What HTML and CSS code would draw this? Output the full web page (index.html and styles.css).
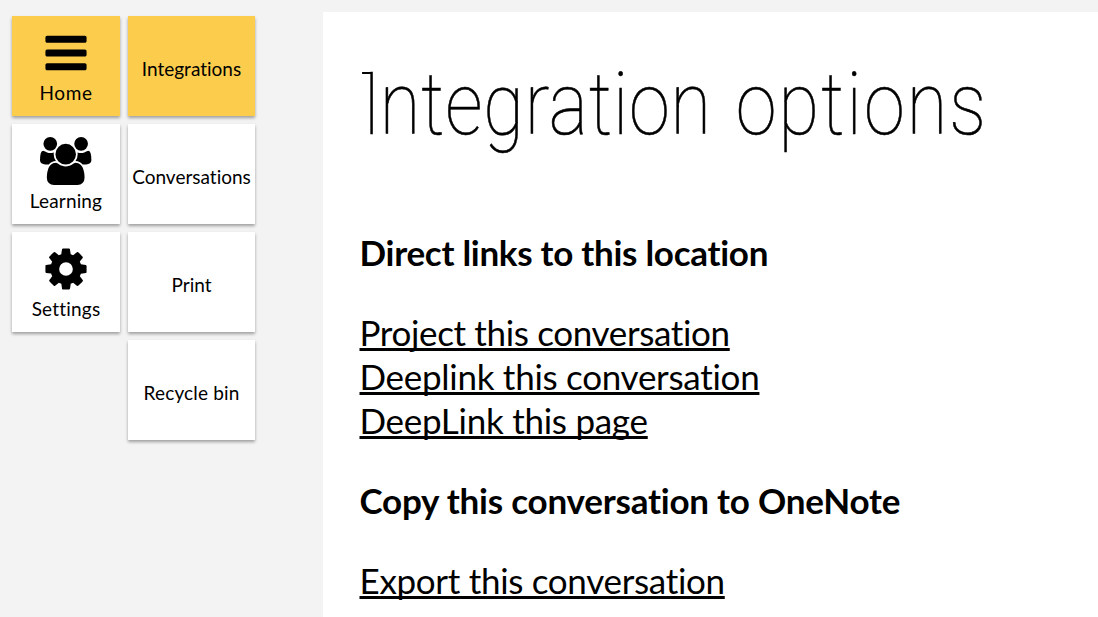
FILE: index.html
```html
<!DOCTYPE html>
<html lang="en">
<head>
<meta charset="utf-8">
<title>Integration options</title>
<link rel="stylesheet" href="styles.css">
</head>
<body>
<div class="layout">
  <nav class="menu main-menu">
    <a class="tile active">
      <svg class="icon" viewBox="0 0 1792 1792"><path d="M1664 1344v128q0 26-19 45t-45 19h-1408q-26 0-45-19t-19-45v-128q0-26 19-45t45-19h1408q26 0 45 19t19 45zm0-512v128q0 26-19 45t-45 19h-1408q-26 0-45-19t-19-45v-128q0-26 19-45t45-19h1408q26 0 45 19t19 45zm0-512v128q0 26-19 45t-45 19h-1408q-26 0-45-19t-19-45v-128q0-26 19-45t45-19h1408q26 0 45 19t19 45z"/></svg>
      <span class="label home">Home</span>
    </a>
    <a class="tile">
      <svg class="icon wide" viewBox="0 0 1920 1792"><path d="M593 896q-162 5-265 128h-134q-82 0-138-40.5t-56-118.5q0-353 124-353 6 0 43.5 21t97.5 42.5 119 21.5q67 0 133-23-5 37-5 66 0 139 81 256zm1071 637q0 120-73 189.5t-194 69.5h-874q-121 0-194-69.5t-73-189.5q0-53 3.5-103.5t14-109 26.5-108.5 43-97.5 62-81 85.5-53.5 111.5-20q10 0 43 21.5t73 48 107 48 135 21.5 135-21.5 107-48 73-48 43-21.5q61 0 111.5 20t85.5 53.5 62 81 43 97.5 26.5 108.5 14 109 3.5 103.5zm-1024-1277q0 106-75 181t-181 75-181-75-75-181 75-181 181-75 181 75 75 181zm704 384q0 159-112.5 271.5t-271.5 112.5-271.5-112.5-112.5-271.5 112.5-271.5 271.5-112.5 271.5 112.5 112.5 271.5zm576 225q0 78-56 118.5t-138 40.5h-134q-103-123-265-128 81-117 81-256 0-29-5-66 66 23 133 23 59 0 119-21.5t97.5-42.5 43.5-21q124 0 124 353zm-128-609q0 106-75 181t-181 75-181-75-75-181 75-181 181-75 181 75 75 181z"/></svg>
      <span class="label learning">Learning</span>
    </a>
    <a class="tile">
      <svg class="icon" viewBox="0 0 1792 1792"><path d="M1152 896q0-106-75-181t-181-75-181 75-75 181 75 181 181 75 181-75 75-181zm512-109v222q0 12-8 23t-20 13l-185 28q-19 54-39 91 35 50 107 138 10 12 10 25t-9 23q-27 37-99 108t-94 71q-12 0-26-9l-138-108q-44 23-91 38-16 136-29 186-7 28-36 28h-222q-14 0-24.5-8.5t-11.5-21.5l-28-184q-49-16-90-37l-141 107q-10 9-25 9-14 0-25-11-126-114-165-168-7-10-7-23 0-12 8-23 15-21 51-66.5t54-70.5q-27-50-41-99l-183-27q-13-2-21-12.5t-8-23.5v-222q0-12 8-23t19-13l186-28q14-46 39-92-40-57-107-138-10-12-10-24 0-10 9-23 26-36 98.5-107.5t94.5-71.5q13 0 26 10l138 107q44-23 91-38 16-136 29-186 7-28 36-28h222q14 0 24.5 8.5t11.5 21.5l28 184q49 16 90 37l142-107q9-9 24-9 13 0 25 10 129 119 165 170 7 8 7 22 0 12-8 23-15 21-51 66.5t-54 70.5q26 50 41 98l183 28q13 2 21 12.5t8 23.5z"/></svg>
      <span class="label settings">Settings</span>
    </a>
  </nav>
  <nav class="menu sub-menu">
    <a class="tile active"><span class="label integrations">Integrations</span></a>
    <a class="tile"><span class="label conversations">Conversations</span></a>
    <a class="tile"><span class="label print">Print</span></a>
    <a class="tile"><span class="label recycle">Recycle bin</span></a>
  </nav>
  <main class="content">
    <h1 class="title"><span class="initial">I</span>ntegration <span class="second">options</span></h1>
    <h2 class="heading direct">Direct links to this location</h2>
    <ul class="links">
      <li><a class="link project">Project this conversation</a></li>
      <li><a class="link deeplink">Deeplink this conversation</a></li>
      <li><a class="link page">DeepLink this page</a></li>
    </ul>
    <h2 class="heading copy">Copy this conversation to OneNote</h2>
    <ul class="links">
      <li><a class="link export">Export this conversation</a></li>
    </ul>
  </main>
</div>
</body>
</html>
```
FILE: styles.css
```css
* { box-sizing: border-box; }
body {
  margin: 0;
  height: 617px;
  overflow: hidden;
  background: #f3f3f3;
  color: #000;
  font-family: Lato, "Open Sans", sans-serif;
  font-variant-ligatures: none;
}
.layout {
  display: grid;
  grid-template-columns: 108px 127px 1fr;
  column-gap: 8px;
  height: 617px;
  padding: 12px 0 0 12px;
}
.menu {
  display: flex;
  flex-direction: column;
  gap: 8px;
  padding-top: 4px;
}
.tile {
  display: flex;
  flex-direction: column;
  align-items: center;
  height: 100px;
  background: #fff;
  box-shadow: 0 2px 3px rgba(0, 0, 0, 0.35);
}
.active { background: #fccd4d; }
.main-menu .tile { padding-top: 13px; }
.sub-menu .tile { padding-top: 41px; }
.icon { width: 48px; height: 48px; flex: none; }
.wide { width: 51.4px; }
.label {
  font-size: 19px;
  line-height: 24px;
  white-space: nowrap;
}
.home { letter-spacing: 0.6px; }
.learning, .recycle { letter-spacing: 0.15px; }
.settings { letter-spacing: 0.2px; }
.main-menu .label { margin-top: 4px; }
.content {
  margin-left: 60px;
  padding: 48px 0 0 36.5px;
  background: #fff;
  white-space: nowrap;
}
/* Condensed hairline title with a flag on the capital I */
.title {
  position: relative;
  margin: 0;
  height: 170px;
  font-family: Roboto, sans-serif;
  font-size: 88px;
  font-weight: 100;
  line-height: 88px;
  letter-spacing: 1px;
  word-spacing: 6.5px;
  transform: scaleX(0.84);
  transform-origin: 13px 0;
  -webkit-text-stroke: 0.6px #000;
}
.title .initial { letter-spacing: -2px; }
.title .second { letter-spacing: 2.5px; }
.title::before {
  content: "";
  position: absolute;
  left: 0;
  top: 12px;
  width: 11px;
  height: 2px;
  background: #000;
}
.heading {
  margin: 0;
  font-size: 35px;
  font-weight: 700;
  line-height: 44px;
  letter-spacing: -0.28px;
}
.copy { letter-spacing: -0.22px; }
.links {
  margin: 36px 0;
  padding: 0;
  list-style: none;
  font-size: 35px;
  line-height: 44px;
}
.links li { height: 44px; }
.link {
  text-decoration: underline;
  text-decoration-thickness: 3px;
  text-underline-offset: 2px;
  text-decoration-skip-ink: none;
}
.project { letter-spacing: -0.35px; }
.deeplink { letter-spacing: -0.28px; }
.page { letter-spacing: -0.27px; }
.export { letter-spacing: -0.31px; }
```
